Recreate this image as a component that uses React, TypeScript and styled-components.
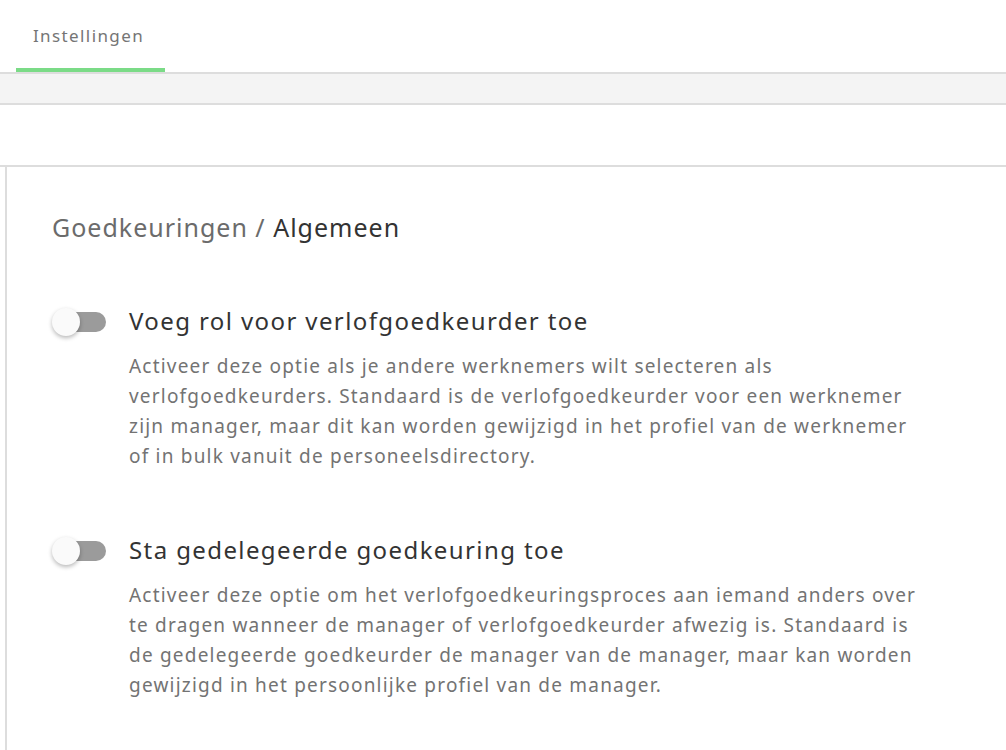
import React, { useState } from "react";
import styled, { createGlobalStyle } from "styled-components";

const GlobalStyle = createGlobalStyle`
  html, body {
    margin: 0;
    padding: 0;
    background: #fff;
  }
  body {
    font-family: "Noto Sans", "Open Sans", sans-serif;
  }
`;

const Page = styled.div`
  width: 1006px;
  min-height: 750px;
  background: #fff;
`;

const TabBar = styled.div`
  display: flex;
  height: 74px;
  padding-left: 16px;
  border-bottom: 2px solid #dddddd;
  box-sizing: border-box;
`;

const Tab = styled.div<{ $active?: boolean }>`
  width: 149px;
  display: flex;
  align-items: center;
  justify-content: center;
  padding-top: 2px;
  padding-right: 4px;
  box-sizing: border-box;
  font-size: 17px;
  letter-spacing: 1.4px;
  color: #757575;
  border-bottom: 4px solid ${(p) => (p.$active ? "#7bdb87" : "transparent")};
`;

const SubBar = styled.div`
  height: 29px;
  background: #f4f4f4;
  border-bottom: 2px solid #dddddd;
`;

const ToolBar = styled.div`
  height: 60px;
  border-bottom: 2px solid #dddddd;
`;

const Panel = styled.section`
  margin-left: 5px;
  border-left: 2px solid #dddddd;
  padding: 44px 45px 0;
  min-height: 583px;
  box-sizing: border-box;
`;

const Crumbs = styled.h2`
  margin: 0 0 62px;
  font-size: 25px;
  font-weight: 400;
  line-height: 32px;
  letter-spacing: 1px;
  color: #6b6b6b;
`;

const Current = styled.span`
  color: #333333;
`;

const Setting = styled.div`
  display: grid;
  grid-template-columns: 77px 1fr;
  margin-bottom: 63px;

  &:last-child {
    margin-bottom: 0;
  }
`;

const Toggle = styled.button<{ $on: boolean }>`
  position: relative;
  width: 56px;
  height: 32px;
  padding: 0;
  border: none;
  background: transparent;
  cursor: pointer;
  margin-top: 1px;

  &::before {
    content: "";
    position: absolute;
    left: 10px;
    top: 6px;
    width: 44px;
    height: 20px;
    border-radius: 10px;
    background: ${(p) => (p.$on ? "#9fe3a8" : "#9b9b9b")};
  }

  &::after {
    content: "";
    position: absolute;
    top: 2px;
    left: ${(p) => (p.$on ? "26px" : "0px")};
    width: 28px;
    height: 28px;
    border-radius: 50%;
    background: ${(p) => (p.$on ? "#7bdb87" : "#fafafa")};
    box-shadow: 0 2px 4px rgba(0, 0, 0, 0.28);
  }
`;

const SettingTitle = styled.div`
  font-size: 24px;
  line-height: 32px;
  letter-spacing: 1.4px;
  color: #333333;
  margin-bottom: 14px;
`;

const SettingText = styled.p`
  margin: 0;
  max-width: 800px;
  font-size: 19px;
  line-height: 30px;
  letter-spacing: 1.2px;
  color: #737373;
`;

const settings = [
  {
    title: "Voeg rol voor verlofgoedkeurder toe",
    text: "Activeer deze optie als je andere werknemers wilt selecteren als verlofgoedkeurders. Standaard is de verlofgoedkeurder voor een werknemer zijn manager, maar dit kan worden gewijzigd in het profiel van de werknemer of in bulk vanuit de personeelsdirectory.",
  },
  {
    title: "Sta gedelegeerde goedkeuring toe",
    text: "Activeer deze optie om het verlofgoedkeuringsproces aan iemand anders over te dragen wanneer de manager of verlofgoedkeurder afwezig is. Standaard is de gedelegeerde goedkeurder de manager van de manager, maar kan worden gewijzigd in het persoonlijke profiel van de manager.",
  },
];

export default function App() {
  const [on, setOn] = useState<boolean[]>([false, false]);

  return (
    <Page>
      <GlobalStyle />
      <TabBar>
        <Tab $active>Instellingen</Tab>
      </TabBar>
      <SubBar />
      <ToolBar />
      <Panel>
        <Crumbs>
          Goedkeuringen / <Current>Algemeen</Current>
        </Crumbs>
        {settings.map((s, i) => (
          <Setting key={s.title}>
            <Toggle
              $on={on[i]}
              aria-label={s.title}
              onClick={() => setOn((prev) => prev.map((v, j) => (j === i ? !v : v)))}
            />
            <div>
              <SettingTitle>{s.title}</SettingTitle>
              <SettingText>{s.text}</SettingText>
            </div>
          </Setting>
        ))}
      </Panel>
    </Page>
  );
}
